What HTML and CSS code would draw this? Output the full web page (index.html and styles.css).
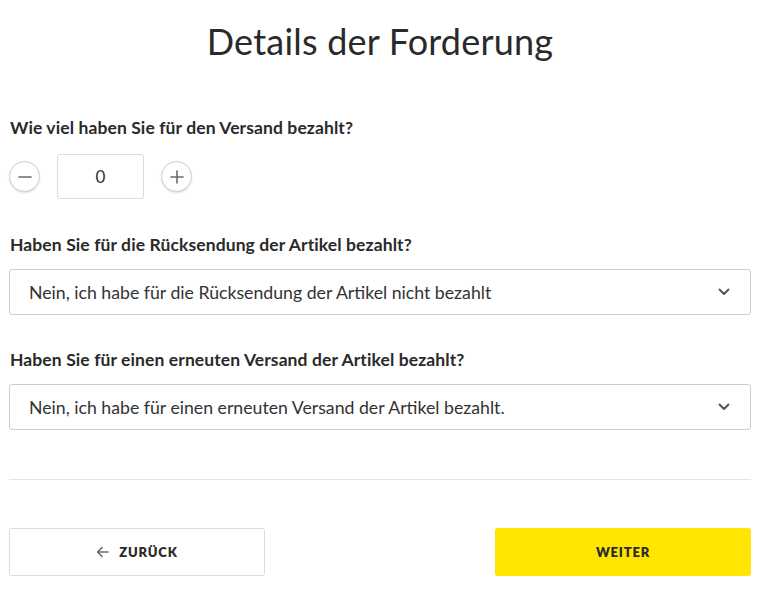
FILE: index.html
```html
<!DOCTYPE html>
<html lang="de">
<head>
<meta charset="utf-8">
<link rel="stylesheet" href="styles.css">
</head>
<body>
<main class="page">
  <h1 class="title">Details der Forderung</h1>

  <section class="field field-first">
    <div class="label">Wie viel haben Sie für den Versand bezahlt?</div>
    <div class="stepper">
      <button class="step-btn" aria-label="minus">
        <svg width="14" height="14" viewBox="0 0 14 14"><path d="M1 7h12" stroke="#6b6b6b" stroke-width="1.6" stroke-linecap="round"/></svg>
      </button>
      <div class="step-value">0</div>
      <button class="step-btn" aria-label="plus">
        <svg width="14" height="14" viewBox="0 0 14 14"><path d="M1 7h12M7 1v12" stroke="#6b6b6b" stroke-width="1.6" stroke-linecap="round"/></svg>
      </button>
    </div>
  </section>

  <section class="field field-second">
    <div class="label">Haben Sie für die Rücksendung der Artikel bezahlt?</div>
    <div class="select">
      <span>Nein, ich habe für die Rücksendung der Artikel nicht bezahlt</span>
      <svg class="chev" width="12" height="8" viewBox="0 0 12 8"><path d="M1.5 1.5L6 6l4.5-4.5" fill="none" stroke="#555" stroke-width="2" stroke-linecap="round" stroke-linejoin="round"/></svg>
    </div>
  </section>

  <section class="field field-third">
    <div class="label">Haben Sie für einen erneuten Versand der Artikel bezahlt?</div>
    <div class="select">
      <span>Nein, ich habe für einen erneuten Versand der Artikel bezahlt.</span>
      <svg class="chev" width="12" height="8" viewBox="0 0 12 8"><path d="M1.5 1.5L6 6l4.5-4.5" fill="none" stroke="#555" stroke-width="2" stroke-linecap="round" stroke-linejoin="round"/></svg>
    </div>
  </section>

  <hr class="divider">

  <div class="actions">
    <button class="btn btn-back">
      <svg width="13" height="12" viewBox="0 0 13 12"><path d="M12 6H1.5M6 1.5L1.5 6 6 10.5" fill="none" stroke="#6b6b6b" stroke-width="1.6" stroke-linecap="round" stroke-linejoin="round"/></svg>
      <span>ZURÜCK</span>
    </button>
    <button class="btn btn-next"><span>WEITER</span></button>
  </div>
</main>
</body>
</html>
```

FILE: styles.css
```css
* { box-sizing: border-box; }
html, body { margin: 0; padding: 0; background: #fff; }
body {
  font-family: "Lato", "Noto Sans", sans-serif;
  color: #2a2a2a;
}
.page {
  width: 742px;
  margin-left: 9px;
  display: flex;
  flex-direction: column;
}
.title {
  margin: 17px 0 0;
  font-size: 36px;
  font-weight: 400;
  line-height: 48px;
  text-align: center;
  letter-spacing: 0.2px;
}
.field { display: flex; flex-direction: column; }
.field-first { margin-top: 52px; }
.field-second { margin-top: 35px; }
.field-third { margin-top: 34px; }
.label {
  font-size: 17.5px;
  font-weight: 700;
  line-height: 22px;
  margin-left: 1px;
  letter-spacing: 0.1px;
}
.stepper {
  margin-top: 15px;
  display: flex;
  align-items: center;
  gap: 17px;
}
.step-btn {
  width: 31px;
  height: 31px;
  border-radius: 50%;
  border: 1px solid #cfcfcf;
  background: #fff;
  box-shadow: 0 1px 2px rgba(0,0,0,0.12);
  display: flex;
  align-items: center;
  justify-content: center;
  padding: 0;
}
.step-value {
  width: 87px;
  height: 45px;
  border: 1px solid #dcdcdc;
  border-radius: 3px;
  display: flex;
  align-items: center;
  justify-content: center;
  font-size: 17px;
  color: #333;
}
.select {
  margin-top: 13px;
  height: 46px;
  border: 1px solid #cdcdcd;
  border-radius: 3px;
  display: flex;
  align-items: center;
  justify-content: space-between;
  padding: 0 20px 0 19px;
  font-size: 17.7px;
  color: #333;
}
.chev { display: block; }
.divider {
  margin: 49px 0 0;
  border: 0;
  border-top: 1px solid #e2e2e2;
  height: 0;
}
.actions {
  margin-top: 48px;
  display: flex;
  justify-content: space-between;
}
.btn {
  width: 256px;
  height: 48px;
  border-radius: 3px;
  display: flex;
  align-items: center;
  justify-content: center;
  gap: 10px;
  font-family: "Lato", "Noto Sans", sans-serif;
  font-size: 13px;
  font-weight: 800;
  letter-spacing: 0.8px;
  color: #2a2a2a;
  padding: 0;
}
.btn-back { background: #fff; border: 1px solid #dcdcdc; }
.btn-next { background: #ffe500; border: 0; }
```
